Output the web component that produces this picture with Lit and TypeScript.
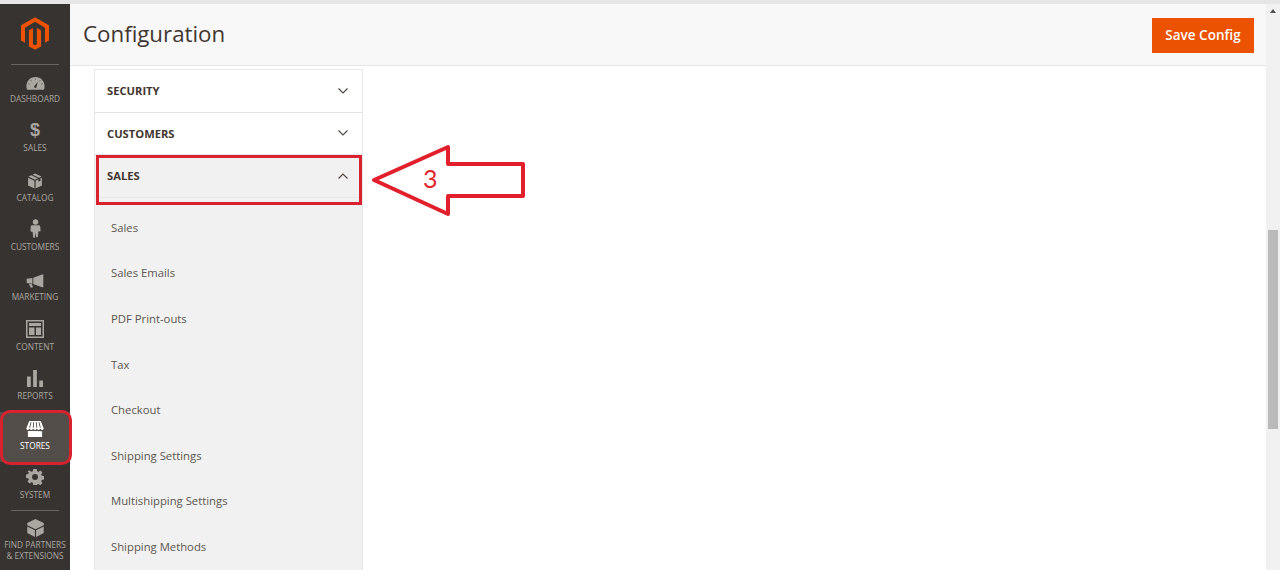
import { LitElement, html, css, svg } from "lit";
import { customElement } from "lit/decorators.js";

const ICONS: Record<string, unknown> = {
  dashboard: svg`<svg class="ico" width="19" height="13" viewBox="1 2 20 14"><path fill="currentColor" fill-rule="evenodd" d="M11 2C5.200 2 1.200 6.600 1.200 12c0 1.600.3 2.800.8 3.800h18c.5-1 .8-2.200.8-3.800C20.800 6.600 16.800 2 11 2zM11.800 13.500a1.500 1.500 0 0 1-2.300-1.300l4-5.200zM10.800 3.700h.4v1.700h-.4zM6 5.200l1 1.400-.4.3-1-1.400zM16 5.200l.4.3-1 1.400-.4-.3zM3.300 9l1.700.6-.2.5-1.600-.6zM18.700 9l.1.500-1.600.6-.2-.5z"/></svg>`,
  sales: html`<span class="dollar">$</span>`,
  catalog: svg`<svg class="ico" width="16" height="16" viewBox="0 0 18 19"><path fill="currentColor" d="M9 .5l7.800 3.700-3 1.500L6 2zM4.700 2.700l7.800 3.700L9 8.100 1.200 4.200zM.8 5.500l7.500 3.700v9.300L.8 14.800zM17.200 5.500v9.300l-7.500 3.700V9.200l3.500-1.700v3l2.300-1.200v-3z"/></svg>`,
  customers: svg`<svg class="ico" width="11" height="19" viewBox="0 0 12 20"><path fill="currentColor" d="M6 0a3 3 0 1 1 0 6 3 3 0 0 1 0-6zM2.500 6.500h7c1 0 1.700.7 1.700 1.700l.3 4.800-1.900.4-.4-.4-.7 6.500H6.700L6 14.500 5.300 20H3.500l-.7-6.500-.4.4L.5 13l.3-4.800c0-1 .7-1.700 1.700-1.700z"/></svg>`,
  marketing: svg`<svg class="ico" width="18" height="14" viewBox="0 0 20 16"><path fill="currentColor" d="M18 .5h1.500V15H18L8 11.300V4.300zM.5 5.300L7 4.500V11l-6.500-.8zM3 11.200l3.500.4L7.700 15l-2.500.7z"/></svg>`,
  content: svg`<svg class="ico" width="18" height="18" viewBox="0 0 18 18"><path fill="currentColor" fill-rule="evenodd" d="M0 0h18v18H0zM1.500 1.500v15h15v-15zM3 3h12v3H3zM3 7.500h5.500V15H3zM10 7.500h5V15h-5z"/></svg>`,
  reports: svg`<svg class="ico" width="16" height="17" viewBox="0 0 17 18"><path fill="currentColor" d="M0 7h4v11H0zM6.500 0h4v18h-4zM13 11h4v7h-4z"/></svg>`,
  stores: svg`<svg class="ico" width="20" height="16" viewBox="0 0 20 18"><path fill="currentColor" fill-rule="evenodd" d="M3.500 0h13l3.300 8.500c0 .9-.9 1.500-1.800 1.500-.9 0-1.500-.5-1.900-1.200-.4.700-1.100 1.200-2 1.200s-1.600-.5-2-1.200c-.4.700-1.100 1.200-2.100 1.200s-1.700-.5-2.100-1.200c-.4.700-1.100 1.200-2 1.200s-1.600-.5-2-1.200C3.500 9.500 2.900 10 2 10 1.100 10 .2 9.400.2 8.500zM5 1.500L3.500 7.500h1L6 1.500zM8 1.500L7.500 7.500h1L9 1.500zM11 1.500l.5 6h1L12 1.500zM14 1.500l1.500 6h1L15 1.500zM2 11.200c1 .3 2 .2 2.700-.2.700.4 1.700.5 2.600.1.900.4 2 .4 2.700 0 .8.400 1.800.4 2.700 0 .8.400 1.800.5 2.600.1.700.4 1.700.5 2.700.2V18H2z"/></svg>`,
  system: svg`<svg class="ico" width="18" height="18" viewBox="-1 0 20 18"><path fill="currentColor" fill-rule="evenodd" d="M7 0h4l.4 2.500 1.500.6L15 1.700l2.300 2.400-1.400 2 .6 1.500 2.500.4v3.900l-2.500.4-.6 1.500 1.400 2-2.300 2.400-2.100-1.400-1.500.6L11 18H7l-.4-2.500-1.500-.6L3 16.300.7 13.900l1.400-2-.6-1.500L-1 10V6.200l2.500-.4.600-1.500-1.400-2L3 1.700l2.100 1.400 1.500-.6zM9 5.700a3.300 3.300 0 1 0 0 6.600 3.300 3.300 0 0 0 0-6.600z"/></svg>`,
  partners: svg`<svg class="ico" width="19" height="18" viewBox="0 0 19 19"><path fill="currentColor" d="M9.500 0l8.700 4.200v2.300l-8.700 4.300L.8 6.500V4.200zM.8 7.800l8.100 4.100V19L.8 14.900zM18.200 7.800v7.100L10.100 19v-7.100z"/></svg>`,
};

const NAV: [string, string][] = [
  ["dashboard", "DASHBOARD"],
  ["sales", "SALES"],
  ["catalog", "CATALOG"],
  ["customers", "CUSTOMERS"],
  ["marketing", "MARKETING"],
  ["content", "CONTENT"],
  ["reports", "REPORTS"],
  ["stores", "STORES"],
  ["system", "SYSTEM"],
];

const SUB = ["Sales", "Sales Emails", "PDF Print-outs", "Tax", "Checkout", "Shipping Settings", "Multishipping Settings", "Shipping Methods"];

const chevron = (up: boolean) => svg`<svg class="chev" width="10" height="6" viewBox="0 0 10 6"><path d=${up ? "M.5 5.500L5 1l4.500 4.500" : "M.5.500L5 5 9.500.500"} fill="none" stroke="#514943" stroke-width="1.200"/></svg>`;

@customElement("app-root")
export class AppRoot extends LitElement {
  static styles = css`
    :host { display: block; height: 570px; overflow: hidden; position: relative; background: #fff; font-family: "Open Sans", sans-serif; }
    .top { height: 4px; background: #e6e6e6; }
    .page { display: flex; height: 566px; }
    .side { width: 70px; flex: none; background: #373330; display: flex; flex-direction: column; align-items: stretch; overflow: hidden; }
    .logo { height: 60px; display: flex; justify-content: center; padding-top: 13px; box-sizing: border-box; flex: none; }
    .sep { height: 1px; background: #6b6560; margin: 0 11px; flex: none; }
    .items { display: flex; flex-direction: column; }
    .nav { height: 49.6px; box-sizing: border-box; display: flex; flex-direction: column; align-items: center; justify-content: flex-end; padding-bottom: 11px; color: #aaa6a0; font-size: 8.3px; line-height: 11px; gap: 3px; flex: none; white-space: nowrap; text-align: center; }
    .nav.active { background: #524d49; color: #fff; }
    .nav .ico { display: block; }
    .dollar { font-family: "Liberation Sans", sans-serif; font-weight: 700; font-size: 18px; line-height: 18px; }
    .sep2 { margin-top: -1px; }
    .partners { display: flex; flex-direction: column; align-items: center; padding-top: 8px; color: #aaa6a0; font-size: 8.3px; line-height: 10.5px; text-align: center; gap: 3px; white-space: nowrap; }
    .main { flex: 1; min-width: 0; display: flex; flex-direction: column; }
    .head { height: 62px; flex: none; box-sizing: border-box; background: #f8f8f8; border-bottom: 1px solid #e6e6e6; display: flex; align-items: center; justify-content: space-between; padding: 0 12px 0 13px; }
    h1 { margin: 0 0 2px; font-weight: 400; font-size: 22.3px; color: #41362f; line-height: 30px; }
    .save { width: 102px; height: 35px; background: #eb5202; color: #fff; font-size: 13.5px; font-weight: 600; display: flex; align-items: center; justify-content: center; margin-top: 1px; }
    .body { flex: 1; display: flex; min-height: 0; padding-top: 3px; }
    .panel { width: 269px; box-sizing: border-box; margin-left: 24px; border-left: 1px solid #e8e8e8; border-right: 1px solid #e8e8e8; border-top: 1px solid #e8e8e8; flex: none; overflow: hidden; }
    .sec { height: 42.5px; box-sizing: border-box; display: flex; align-items: center; justify-content: space-between; padding: 0 14px 0 12px; font-size: 11.2px; font-weight: 700; color: #41362f; border-bottom: 1px solid #e3e3e3; }
    .sec.open { background: #f1f1f1; border-bottom-color: #e9e9e9; }
    .subs { background: #f1f1f1; display: flex; flex-direction: column; height: 400px; padding-top: 7px; }
    .sub { height: 45.6px; flex: none; display: flex; align-items: center; padding-left: 16px; font-size: 11.3px; color: #5c5650; }
    .rest { flex: 1; padding: 502px 0 0 118px; }
    .box { width: 318px; height: 20px; box-sizing: border-box; border: 1px solid #e3e3e3; }
    .bar { width: 14px; flex: none; background: #f1f1f1; display: flex; flex-direction: column; align-items: center; padding-top: 5px; box-sizing: border-box; }
    .up { width: 0; height: 0; border-left: 3.5px solid transparent; border-right: 3.5px solid transparent; border-bottom: 4px solid #505050; margin-bottom: 217px; }
    .thumb { width: 10px; height: 199px; background: #bababa; }
    .mark { position: absolute; box-sizing: border-box; border: 3px solid #d8232f; }
    .mark.store { left: 0; top: 410px; width: 72px; height: 55px; border-radius: 10px; }
    .mark.sales { left: 96px; top: 155px; width: 266px; height: 50px; }
    .arrow { position: absolute; left: 370px; top: 142px; }
    .arrow text { font-family: Lato, sans-serif; font-size: 25px; fill: #e2282f; }
  `;

  render() {
    return html`
      <div class="top"></div>
      <div class="page">
        <nav class="side">
          <div class="logo">
            <svg width="28" height="33" viewBox="3 2 18 21"><path fill="#eb5202" d="M12 2L3 7.200V17l2.600 1.500V8.800L12 5l6.400 3.800v9.700L21 17V7.200zM13.200 19.400l-1.200.7-1.300-.7V8.900L8.100 10.400v10.500L12 23l3.900-2.100V10.400l-2.700-1.500z"/></svg>
          </div>
          <div class="sep"></div>
          <div class="items">
            ${NAV.map(([k, l]) => html`<div class="nav ${k === "stores" ? "active" : ""}">${ICONS[k]}<span>${l}</span></div>`)}
          </div>
          <div class="sep sep2"></div>
          <div class="partners">${ICONS.partners}<span>FIND PARTNERS<br />&amp; EXTENSIONS</span></div>
        </nav>
        <div class="main">
          <header class="head">
            <h1>Configuration</h1>
            <div class="save">Save Config</div>
          </header>
          <div class="body">
            <aside class="panel">
              <div class="sec"><span>SECURITY</span>${chevron(false)}</div>
              <div class="sec"><span>CUSTOMERS</span>${chevron(false)}</div>
              <div class="sec open"><span>SALES</span>${chevron(true)}</div>
              <div class="subs">${SUB.map((s) => html`<div class="sub">${s}</div>`)}</div>
            </aside>
            <div class="rest"><div class="box"></div></div>
          </div>
        </div>
        <div class="bar"><div class="up"></div><div class="thumb"></div></div>
      </div>
      <div class="mark store"></div>
      <div class="mark sales"></div>
      <svg class="arrow" width="158" height="78" viewBox="0 0 158 78">
        <path d="M4 38L78 5V22H153V54H78V72Z" fill="none" stroke="#e2202c" stroke-width="4" stroke-linejoin="round"/>
        <text x="53" y="46">3</text>
      </svg>
    `;
  }
}
